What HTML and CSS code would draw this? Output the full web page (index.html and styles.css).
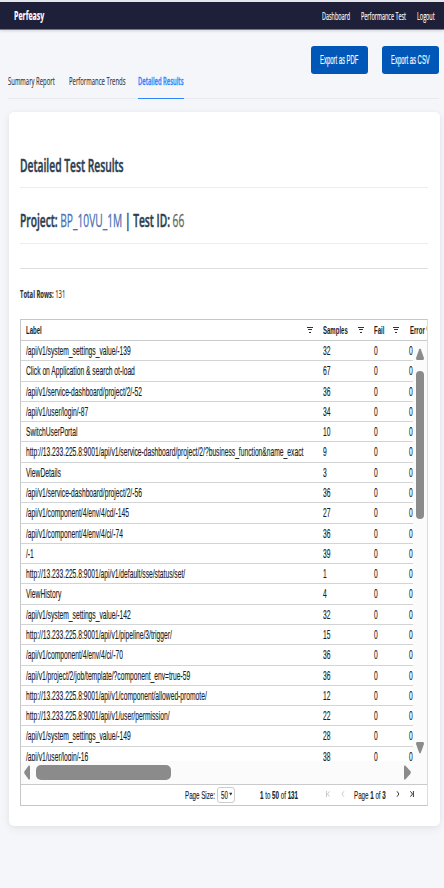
FILE: index.html
```html
<!DOCTYPE html>
<html lang="en">
<head>
<meta charset="utf-8">
<title>Perfeasy</title>
<link rel="stylesheet" href="styles.css">
</head>
<body>
<nav class="nav">
  <div class="brand"><span class="t">Perfeasy</span></div>
  <div class="link dash"><span class="t">Dashboard</span></div>
  <div class="link perf"><span class="t">Performance Test</span></div>
  <div class="link out"><span class="t">Logout</span></div>
</nav>
<header class="actions">
  <button class="btn"><span class="t">Export as PDF</span></button>
  <button class="btn"><span class="t">Export as CSV</span></button>
</header>
<div class="tabs">
  <div class="tab summary"><span class="t">Summary Report</span></div>
  <div class="tab trends"><span class="t">Performance Trends</span></div>
  <div class="tab active"><span class="t">Detailed Results</span></div>
</div>
<main class="card">
  <h2 class="title"><span class="t">Detailed Test Results</span></h2>
  <h2 class="project"><span class="t">Project: <span class="name">BP_10VU_1M</span> | Test ID: <span class="id">66</span></span></h2>
  <div class="rule"></div>
  <p class="total"><span class="t"><b>Total Rows:</b> 131</span></p>
  <section class="grid">
    <div class="head">
      <span class="t">Label</span><i class="filter"></i>
      <span class="t">Samples</span><i class="filter"></i>
      <span class="t">Fail</span><i class="filter"></i>
      <span class="t">Error %</span>
    </div>
    <div class="body">
      <div class="rows" id="rows"></div>
      <div class="vbar">
        <svg class="up" viewBox="0 0 8 12"><path d="M3.2 1.2Q4 0 4.8 1.2L8 10Q8 12 7 12H1Q0 12 0 10Z"/></svg>
        <div class="vthumb"></div>
        <svg class="down" viewBox="0 0 8 12"><path d="M3.2 10.8Q4 12 4.8 10.8L8 2Q8 0 7 0H1Q0 0 0 2Z"/></svg>
      </div>
    </div>
    <div class="hbar">
      <svg class="left" viewBox="0 0 6 15"><path d="M.5 6.3Q0 7.5.5 8.7L4.7 14.5Q6 15 6 13.5V1.5Q6 0 4.7.5Z"/></svg>
      <div class="hthumb"></div>
      <svg class="right" viewBox="0 0 7 15"><path d="M6.5 6.3Q7 7.5 6.5 8.7L1.3 14.5Q0 15 0 13.5V1.5Q0 0 1.3.5Z"/></svg>
    </div>
    <footer class="pager">
      <div class="psize"><span class="t">Page Size:</span></div>
      <div class="select"><span class="t">50</span><svg viewBox="0 0 4 4"><path d="M0 .5H4L2 3.8Z"/></svg></div>
      <div class="range"><span class="t"><b>1</b> to <b>50</b> of <b>131</b></span></div>
      <svg class="nv off" viewBox="0 0 4 6"><path d="M.5 0V6M3.6.3L1.5 3L3.6 5.7"/></svg>
      <svg class="nv off" viewBox="0 0 4 6"><path d="M2.9.3L1 3L2.9 5.7"/></svg>
      <div class="page"><span class="t">Page <b>1</b> of <b>3</b></span></div>
      <svg class="nv next" viewBox="0 0 4 6"><path d="M1 .3L2.9 3L1 5.7"/></svg>
      <svg class="nv last" viewBox="0 0 4 6"><path d="M.4.3L2.5 3L.4 5.7M3.4 0V6"/></svg>
    </footer>
  </section>
</main>
<script src="rows.js"></script>
</body>
</html>
```
FILE: styles.css
```css
* { box-sizing: border-box; }
body { margin: 0; width: 444px; height: 888px; overflow: hidden; background: #f4f6fa; font-family: "Open Sans", "Noto Sans", sans-serif; color: #333; }
.t { display: inline-block; white-space: nowrap; transform: scaleX(var(--s)); transform-origin: left; -webkit-text-stroke: .15px currentColor; }
.nav { display: grid; grid-template-columns: 308px 39px 55.5px 41.5px; align-items: center; height: 30px; padding-left: 14px; background: #1e2039; border-top: 2px solid #e4e5e8; border-bottom: 1px solid #77778a; color: #fff; box-shadow: 0 1px 3px #0002; overflow: hidden; }
.nav > div { min-width: 0; }
.brand { --s: .56; font-size: 12.5px; font-weight: 700; line-height: 26px; }
.link { --s: .505; font-size: 10.8px; line-height: 26px; }
.actions { display: flex; justify-content: flex-end; gap: 14px; padding: 16px 5px 0 0; height: 44px; }
.btn { width: 57px; height: 28px; border: 0; border-radius: 3px; background: #0057b8; color: #fff; padding: 0 0 0 9px; text-align: left; font: 12.4px/28px "Liberation Sans", sans-serif; --s: .477; overflow: hidden; }
.tabs { display: flex; height: 25px; margin: 0 5px 0 8px; border-bottom: 1px solid #e8eaee; --s: .515; font-size: 11.5px; line-height: 14px; }
.tab { height: 25px; flex: none; }
.summary { width: 61px; }
.trends { width: 69px; }
.active { width: 45.5px; color: #2f87ff; font-weight: 600; border-bottom: 1.5px solid #2f87ff; --s: .507; }
.active .t { -webkit-text-stroke-width: .35px; }
.card { margin: 13px 4.5px 0 9px; height: 714px; background: #fff; border-radius: 5px; box-shadow: 0 3px 8px #0001, 0 0 5px #00000008; padding: 39px 11.5px 0 10.5px; }
h2, p { margin: 0; }
h2 { color: #2c3e50; font-size: 18px; font-weight: 600; line-height: 28px; border-bottom: 1px solid #eceef0; }
.title { height: 37px; --s: .571; }
h2 .t { -webkit-text-stroke-width: .5px; }
.project { height: 56px; padding-top: 18px; --s: .568; }
.name { color: #4a72b4; font-weight: 400; -webkit-text-stroke: .3px #4a72b4; }
.id { color: #666; font-weight: 400; -webkit-text-stroke: .3px #666; }
.rule { height: 25px; border-bottom: 1px solid #dedede; }
.total { height: 50px; padding-top: 17px; font-size: 10.5px; line-height: 17px; --s: .56; }
.grid { height: 487px; border: 1px solid #c4c6c8; border-right-color: #dcdcdc; font-family: "Liberation Sans", sans-serif; font-size: 12.8px; color: #181d1f; --s: .524; overflow: hidden; }
.head { display: grid; grid-template-columns: 281px 16.5px 35px 16px 19px 16.5px 18px; align-items: center; height: 21px; padding-left: 5px; border-bottom: 1px solid #c8cacb; font-weight: 700; font-size: 11.6px; line-height: 18px; padding-bottom: 1px; overflow: hidden; --s: .52; }
.head .t { justify-self: start; -webkit-text-stroke-width: 0; }
.filter { width: 6px; height: 6px; background: linear-gradient(#333, #333) center top / 6px 1px no-repeat, linear-gradient(#333, #333) center 2.5px / 4px 1px no-repeat, linear-gradient(#333, #333) center bottom / 2px 1px no-repeat; }
.body { display: flex; height: 420px; overflow: hidden; }
.rows { width: 394px; overflow: hidden; }
.row { display: grid; grid-template-columns: 297.5px 51px 35.3px 4px; height: 20.29px; padding-left: 5px; border-bottom: 1px solid #d2d4d5; line-height: 20px; }
.row > div { min-width: 0; }
.vbar { width: 14px; background: #fbfbfb; padding: 7px 0 0 3px; }
svg { display: block; fill: #8b8b8b; }
.up, .down { width: 8px; height: 12px; }
.vthumb { width: 8px; height: 148px; margin: 11px 0 223px; background: #8b8b8b; border-radius: 4px; }
.hbar { display: flex; align-items: center; height: 24px; padding-left: 3.5px; background: #fbfbfb; border-bottom: 1px solid #c8cacb; }
.left { width: 6px; height: 15px; }
.hthumb { width: 135px; height: 15px; margin: 0 232.5px 0 6px; background: #8b8b8b; border-radius: 5px; }
.right { width: 7px; height: 15px; }
.pager { display: flex; align-items: center; height: 20px; padding-left: 164.5px; font-size: 11.4px; --s: .545; }
.pager > * { flex: none; }
.psize { width: 32px; }
.select { display: flex; align-items: center; width: 18px; height: 16px; padding-left: 2.5px; border: 1px solid #ccc; border-radius: 3px; line-height: 14px; }
.select .t { width: 8px; flex: none; }
.select svg { width: 3.5px; height: 4px; fill: #333; margin-top: -3px; }
.range { width: 66px; margin-left: 25px; }
.nv { width: 4px; height: 6px; fill: none; stroke: #222; stroke-width: .9; margin: -3px 11px 0 0; }
.off { stroke: #c4c4c4; }
.page { width: 42px; margin-left: -2.5px; }
.next { margin-right: 10px; }
```
FILE: rows.js
```js
const data = [
  ["/api/v1/system_settings_value/-139", 32],
  ["Click on Application & search ot-load", 67],
  ["/api/v1/service-dashboard/project/2/-52", 36],
  ["/api/v1/user/login/-87", 34],
  ["SwitchUserPortal", 10],
  ["http://13.233.225.8:9001/api/v1/service-dashboard/project/2/?business_function&name_exact", 9],
  ["ViewDetails", 3],
  ["/api/v1/service-dashboard/project/2/-56", 36],
  ["/api/v1/component/4/env/4/cd/-145", 27],
  ["/api/v1/component/4/env/4/ci/-74", 36],
  ["/-1", 39],
  ["http://13.233.225.8:9001/api/v1/default/sse/status/set/", 1],
  ["ViewHistory", 4],
  ["/api/v1/system_settings_value/-142", 32],
  ["http://13.233.225.8:9001/api/v1/pipeline/3/trigger/", 15],
  ["/api/v1/component/4/env/4/ci/-70", 36],
  ["/api/v1/project/2/job/template/?component_env=true-59", 36],
  ["http://13.233.225.8:9001/api/v1/component/allowed-promote/", 12],
  ["http://13.233.225.8:9001/api/v1/user/permission/", 22],
  ["/api/v1/system_settings_value/-149", 28],
  ["/api/v1/user/login/-16", 38]
];
const rows = document.getElementById("rows");
for (const [label, samples] of data) {
  const row = document.createElement("div");
  row.className = "row";
  for (const value of [label, samples, 0, 0]) {
    const cell = document.createElement("div");
    const text = document.createElement("span");
    text.className = "t";
    text.textContent = value;
    cell.append(text);
    row.append(cell);
  }
  rows.append(row);
}
```
